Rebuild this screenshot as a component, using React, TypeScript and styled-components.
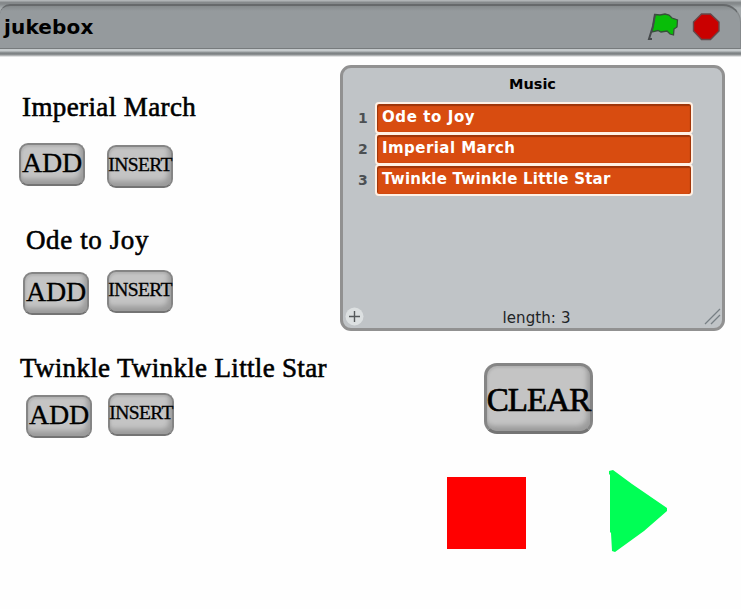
import React from 'react';
import styled, { createGlobalStyle } from 'styled-components';

const GlobalStyle = createGlobalStyle`
  * { box-sizing: border-box; }
  body { margin: 0; background: #fefefe; overflow: hidden; }
`;

const Stage = styled.div`
  width: 741px;
  height: 609px;
  background: #fefefe;
  color: #000;
`;

const TitleBar = styled.header`
  height: 57px;
  padding-top: 1px;
  overflow: hidden;
  background: linear-gradient(#b0b4b6 0 1px, #85898b 2px, #85898b 4px, #a6abad 8px, #a6abad 47px,
    #c5cacc 49px, #c5cacc 51px, #94999b 52px, #777c7e 54px, #c4c6c7 56px, #fefefe 57px);
`;

const TitleFace = styled.div`
  display: flex;
  align-items: center;
  height: 45px;
  margin-top: 3px;
  padding: 0 20px 0 4px;
  border-top: 2px solid #66696b;
  border-bottom: 1px solid #777b7d;
  border-right: 1px solid #85898b;
  border-radius: 10px 18px 0 0;
  background: linear-gradient(#858a8c, #959a9d 5px, #959a9d);
`;

const ProjectName = styled.h1`
  flex: 1;
  margin: 0;
  font: bold 20px/24px "DejaVu Sans", sans-serif;
  letter-spacing: 0.15px;
`;

const Controls = styled.div`
  display: flex;
  align-items: center;
  gap: 13px;
  svg { display: block; }
`;

const Body = styled.main`
  display: flex;
  height: 552px;
`;

const Songs = styled.section`
  width: 340px;
`;

const Song = styled.article<{ $height: number; $top: number }>`
  height: ${(p) => p.$height}px;
  padding-top: ${(p) => p.$top}px;
`;

const SongTitle = styled.h2<{ $left: number; $spacing: number }>`
  margin: 0 0 0 ${(p) => p.$left}px;
  font: 27px/30px "Liberation Serif", serif;
  letter-spacing: ${(p) => p.$spacing}px;
  white-space: nowrap;
  -webkit-text-stroke: 0.6px #000;
`;

const Buttons = styled.div<{ $left: number; $gap: number }>`
  display: flex;
  align-items: flex-start;
  gap: ${(p) => p.$gap}px;
  padding-left: ${(p) => p.$left}px;
`;

const Button = styled.button<{ $size: number; $spacing: number; $top: number; $large?: boolean }>`
  display: flex;
  justify-content: center;
  width: ${(p) => (p.$large ? 109 : 66)}px;
  height: ${(p) => (p.$large ? 71 : 43)}px;
  margin: ${(p) => p.$top}px 0 0;
  padding: 0;
  border: ${(p) => (p.$large ? 3 : 2)}px solid #858585;
  border-bottom-color: #747474;
  border-radius: ${(p) => (p.$large ? 13 : 9)}px;
  background: #c4c4c4;
  box-shadow: inset -3px -5px 5px #9b9b9b, inset 1px 2px 2px #b4b4b4;
  color: #000;
  font: ${(p) => p.$size}px/${(p) => (p.$large ? 68 : 36)}px "Liberation Serif", serif;
  letter-spacing: ${(p) => p.$spacing}px;
  white-space: nowrap;
  -webkit-text-stroke: ${(p) => (p.$large ? 0.7 : 0.3)}px #000;
`;

const Side = styled.section`
  display: flex;
  flex-direction: column;
  width: 401px;
  padding-top: 8px;
`;

const ListPanel = styled.div`
  display: flex;
  flex-direction: column;
  width: 385px;
  height: 266px;
  border: 3px solid #919191;
  border-radius: 11px;
  background: #c0c4c7;
  font-family: "DejaVu Sans", sans-serif;
`;

const ListTitle = styled.h3`
  height: 34px;
  margin: 0;
  font: bold 14.5px/32px "DejaVu Sans", sans-serif;
  letter-spacing: 0;
  text-align: center;
`;

const Items = styled.ol`
  margin: 0;
  padding: 0;
  list-style: none;
`;

const Item = styled.li`
  display: flex;
  height: 31.2px;
`;

const Index = styled.span`
  width: 32px;
  padding-left: 15px;
  color: #4c5053;
  font: bold 14px/32px "DejaVu Sans", sans-serif;
`;

const Value = styled.span<{ $spacing: number }>`
  width: 318px;
  height: 32px;
  padding-left: 5px;
  border: 2px solid #fff0e4;
  border-radius: 4px;
  background: #d84c10;
  box-shadow: inset 1px 2px 1px #9d3509, inset -1px 0 1px #9d3509;
  color: #fff;
  font: bold 15px/26px "DejaVu Sans", sans-serif;
  letter-spacing: ${(p) => p.$spacing}px;
  white-space: nowrap;
`;

const Footer = styled.div`
  display: grid;
  grid-template-columns: 60px 1fr 60px;
  align-items: center;
  height: 24px;
  margin-top: auto;
  padding: 0 1px 0 2px;
  svg { display: block; }
  svg:last-child { justify-self: end; }
`;

const Length = styled.span`
  padding: 3px 0 0 7px;
  color: #202326;
  font-size: 15px;
  letter-spacing: 0.1px;
  text-align: center;
`;

const ClearRow = styled.div`
  display: flex;
  padding: 32px 0 0 144px;
`;

const Playback = styled.div`
  display: flex;
  gap: 82px;
  padding: 36px 0 0 107px;
  svg { display: block; }
`;

const StopSquare = styled.div`
  width: 79px;
  height: 72px;
  margin-top: 6.5px;
  background: #f00;
`;

const songs = [
  { name: 'Imperial March', height: 130, top: 35, left: 22, spacing: 0.4, buttons: 19, gap: 22, add: 21, insert: 23 },
  { name: 'Ode to Joy', height: 128, top: 38, left: 26, spacing: 0.6, buttons: 23, gap: 18, add: 17, insert: 15 },
  { name: 'Twinkle Twinkle Little Star', height: 130, top: 38, left: 20, spacing: 0.33, buttons: 26, gap: 16, add: 12, insert: 10 },
];

const entries = [
  { name: 'Ode to Joy', spacing: 0.6 },
  { name: 'Imperial March', spacing: 0.45 },
  { name: 'Twinkle Twinkle Little Star', spacing: 0.22 },
];

export default function App() {
  return (
    <Stage>
      <GlobalStyle />
      <TitleBar>
        <TitleFace>
          <ProjectName>jukebox</ProjectName>
          <Controls>
            <svg width="32" height="30" viewBox="0 0 32 30">
              <path d="M8 2.5L13 3L18 2L22 3L25 6L30.5 8L30 15L27 17L26.5 23L23 22L20 19L14 20L11 18.5L5 20Z" fill="#08bd08" stroke="#365039" strokeWidth="1.3" />
              <path d="M8 2L6 14L2 27H5" fill="none" stroke="#45494b" strokeWidth="2" />
            </svg>
            <svg width="28" height="28" viewBox="0 0 28 28">
              <path d="M9.5 1H18.5L27 9V18L18.5 26.5H9.5L1.5 18V9Z" fill="#ca0000" stroke="#65494b" strokeWidth="1.4" />
            </svg>
          </Controls>
        </TitleFace>
      </TitleBar>
      <Body>
        <Songs>
          {songs.map((song) => (
            <Song key={song.name} $height={song.height} $top={song.top}>
              <SongTitle $left={song.left} $spacing={song.spacing}>{song.name}</SongTitle>
              <Buttons $left={song.buttons} $gap={song.gap}>
                <Button $size={28} $spacing={-0.2} $top={song.add}>ADD</Button>
                <Button $size={19.5} $spacing={-0.6} $top={song.insert}>INSERT</Button>
              </Buttons>
            </Song>
          ))}
        </Songs>
        <Side>
          <ListPanel>
            <ListTitle>Music</ListTitle>
            <Items>
              {entries.map((entry, i) => (
                <Item key={entry.name}>
                  <Index>{i + 1}</Index>
                  <Value $spacing={entry.spacing}>{entry.name}</Value>
                </Item>
              ))}
            </Items>
            <Footer>
              <svg width="19" height="19" viewBox="0 0 19 19">
                <circle cx="9.5" cy="9.5" r="9" fill="#dce0e1" />
                <path d="M9.5 4V15M4 9.5H15" stroke="#55595b" strokeWidth="1.4" />
              </svg>
              <Length>length: 3</Length>
              <svg width="18" height="18" viewBox="0 0 18 18">
                <path d="M2 17L17 2M8 17L17 8" stroke="#777f84" strokeWidth="1.3" />
              </svg>
            </Footer>
          </ListPanel>
          <ClearRow>
            <Button $large $size={33} $spacing={-0.9} $top={0}>CLEAR</Button>
          </ClearRow>
          <Playback>
            <StopSquare />
            <svg width="60" height="84" viewBox="0 0 60 84">
              <path d="M1 1L5 0L24 14L59 38V41L36 61L7 82L4 81L3 63L2 62V5L1 4Z" fill="#00ff55" />
            </svg>
          </Playback>
        </Side>
      </Body>
    </Stage>
  );
}
